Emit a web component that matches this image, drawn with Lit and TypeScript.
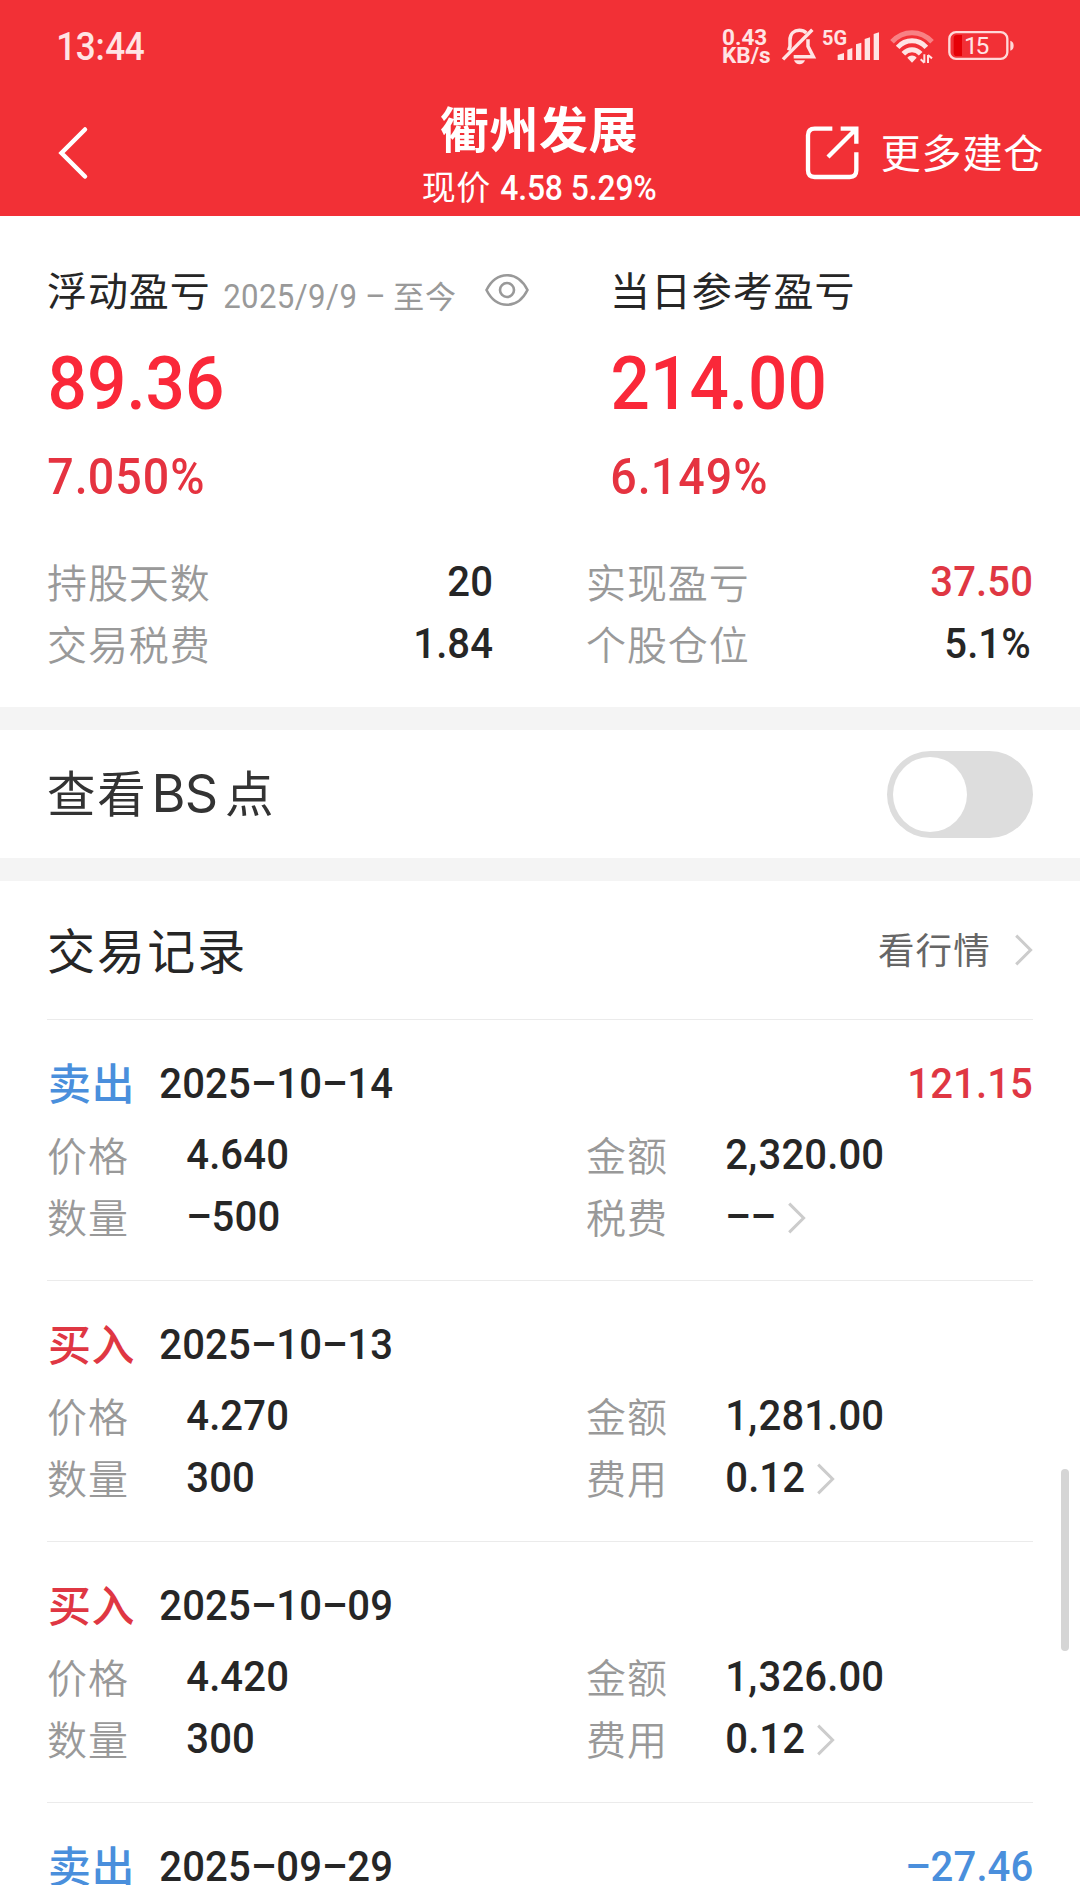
import { LitElement, html, css, svg, nothing } from "lit";
import { customElement, property } from "lit/decorators.js";

/** Advance widths in units of the cap height. */
const ADVANCE: Record<string, number> = {
  ".": 0.36, ",": 0.335, "–": 0.82, "/": 0.56, "%": 1.03, ":": 0.36, " ": 0.33,
};
const DIGIT = 0.744;
const CONDENSE = 0.925;
const CAP_RATIO = 0.711;

/** Condensed tabular figures; its box is exactly as high as the figures. */
@customElement("figure-text")
class FigureText extends LitElement {
  @property() text = "";
  @property({ type: Number }) cap = 30.8;
  @property({ type: Number }) pitch = DIGIT;

  static styles = css`
    :host { display: block; flex: none; }
    .box { display: block; overflow: visible; }
    .txt { font-family: Roboto, "Liberation Sans", sans-serif; fill: currentColor; }
  `;

  render() {
    const xs: string[] = [];
    let x = 0;
    for (const ch of this.text) {
      xs.push(((x + 0.01 * this.cap) / CONDENSE).toFixed(2));
      x += (ADVANCE[ch] ?? this.pitch) * this.cap;
    }
    return html`<svg class="box" width=${x.toFixed(2)} height=${this.cap}>
      ${svg`<text class="txt" x=${xs.join(" ")} y=${this.cap} font-size=${this.cap / CAP_RATIO}
        transform="scale(${CONDENSE} 1)">${this.text}</text>`}
    </svg>`;
  }
}

const chevron = html`<svg class="chevron" width="20" height="34" viewBox="0 0 20 34">
  <path d="M2.2 2.6 L16.6 17 L2.2 31.4" fill="none" stroke="#cccccc" stroke-width="3" />
</svg>`;

interface Trade {
  side: "买入" | "卖出";
  date: string;
  pnl?: string;
  loss?: boolean;
  price?: string;
  qty?: string;
  amount?: string;
  feeLabel?: string;
  fee?: string;
}

const TRADES: Trade[] = [
  { side: "卖出", date: "2025–10–14", pnl: "121.15", price: "4.640", qty: "–500", amount: "2,320.00", feeLabel: "税费", fee: "––" },
  { side: "买入", date: "2025–10–13", price: "4.270", qty: "300", amount: "1,281.00", feeLabel: "费用", fee: "0.12" },
  { side: "买入", date: "2025–10–09", price: "4.420", qty: "300", amount: "1,326.00", feeLabel: "费用", fee: "0.12" },
  { side: "卖出", date: "2025–09–29", pnl: "–27.46", loss: true },
];

@customElement("app-root")
class AppRoot extends LitElement {
  static styles = css`
    :host {
      display: block;
      position: relative;
      width: 1080px;
      height: 1885px;
      overflow: hidden;
      background: #fff;
      color: #262626;
      font-family: "Noto Sans CJK SC", sans-serif;
      line-height: 1;
    }
    svg { display: block; flex: none; }
    .header { height: 216px; background: #f23036; color: #fff; }
    .status {
      height: 92px;
      box-sizing: border-box;
      display: flex;
      align-items: flex-start;
      padding: 0 65px 0 56px;
      color: #ffe4e4;
    }
    .time { margin: 32.5px auto 0 0; font-weight: 500; }
    .speed {
      margin: 27.5px 0 0;
      width: 59px;
      font: 700 22.5px/18.8px Roboto, sans-serif;
    }
    .net { font: 700 20px/18px Roboto, sans-serif; margin: 29px 0 0 4px; width: 15px; }
    .icon { margin-top: 26.6px; }
    .wifi { margin-left: 10px; }
    .fiveg { white-space: nowrap; }
    .battery { margin: 31px 0 0 14px; }
    .batt-text { font-family: Roboto, sans-serif; font-size: 74px; fill: #ffe4e4; }

    .nav {
      height: 124px;
      display: grid;
      grid-template-columns: 1fr auto 1fr;
    }
    .back { margin: 33px 0 0 56px; }
    .heading { display: flex; flex-direction: column; align-items: center; }
    .title { font-size: 49px; font-weight: 700; letter-spacing: 0.6px; margin: 9.5px 2px 0 0; }
    .sub { display: flex; align-items: center; margin-top: 22px; font-weight: 500; }
    .sub-label { font-size: 34px; margin: -4px 9px 0 0; letter-spacing: 0.6px; font-weight: 400; }
    .more { display: flex; justify-content: flex-end; padding-right: 36px; }
    .share { margin-top: 33.3px; }
    .more-text { font-size: 40px; letter-spacing: 0.8px; margin: 39px 0 0 20px; }

    .summary { height: 491px; box-sizing: border-box; padding: 0 47px; }
    .pair { display: grid; grid-template-columns: 563px 1fr; }
    .caption { display: flex; height: 140px; }
    .caption-label { font-size: 40px; letter-spacing: 0.9px; margin-top: 53px; }
    .since { display: flex; color: #999; margin: 68px 0 0 12px; }
    .since-now { font-size: 31px; letter-spacing: 0.7px; margin: -5.5px 0 0 9px; }
    .eye { margin: 56px 0 0 27px; }
    .big { color: #fa2839; font-weight: 500; height: 102px; }
    .mid { color: #e53340; font-weight: 500; height: 92px; }
    .stats { display: grid; grid-template-columns: 446px 447px; column-gap: 93px; }
    .stat { height: 62px; display: flex; align-items: center; justify-content: space-between; }
    .label { font-size: 40px; letter-spacing: 0.9px; color: #999; font-weight: 350; }
    .value { font-weight: 500; margin-top: -2px; }
    .up { color: #df3743; }
    .down { color: #4a8fdc; }

    .gap { height: 23px; background: #f4f4f4; }
    .bs {
      height: 128px;
      box-sizing: border-box;
      padding: 0 47px;
      display: flex;
      justify-content: space-between;
      align-items: center;
      color: #333;
    }
    .bs-text { display: flex; align-items: baseline; font-size: 48.5px; letter-spacing: 1.8px; margin-top: -3px; }
    .latin { font: 400 52px/48px Inter, sans-serif; letter-spacing: -1px; margin: 0 8px 0 4px; }
    .toggle {
      width: 146px; height: 87px; box-sizing: border-box; padding: 6px;
      border-radius: 43.5px; background: #ddd; margin-top: 1px;
    }
    .knob { width: 74px; height: 75px; border-radius: 50%; background: #fff; }

    .records { padding: 0 47px; }
    .rec-head { height: 138px; display: flex; justify-content: space-between; border-bottom: 1px solid #ebebeb; }
    .rec-title { font-size: 48px; letter-spacing: 2.1px; margin-top: 42.5px; }
    .quote { display: flex; color: #666; }
    .quote-text { font-size: 36.5px; letter-spacing: 1.2px; margin: 50px 21px 0 0; }
    .quote .chevron { margin: 52px -1px 0 2px; }
    .trade { height: 261px; box-sizing: border-box; padding-top: 33px; border-bottom: 1px solid #ebebeb; }
    .trade-head { height: 60px; display: flex; align-items: center; margin-bottom: 10px; }
    .side { font-size: 43px; letter-spacing: 0.4px; margin: -2.5px 24px 0 1px; font-weight: 500; }
    .pnl { margin: -2px 0 0 auto; font-weight: 500; }
    .cells { display: grid; grid-template-columns: 539px 1fr; }
    .cell { height: 62px; display: flex; align-items: center; }
    .cell .label { width: 139px; flex: none; }
    .cell .chevron { margin: 3px 0 0 11px; }
    .thumb {
      position: absolute; left: 1061px; top: 1469px; width: 8px; height: 182px;
      border-radius: 4px; background: #d5d5d5;
    }
  `;

  private trade(t: Trade) {
    const sideClass = t.side === "买入" ? "up" : "down";
    return html`<div class="trade">
      <div class="trade-head">
        <span class="side ${sideClass}">${t.side}</span>
        <figure-text class="value" text=${t.date}></figure-text>
        ${t.pnl
          ? html`<figure-text class="pnl ${t.loss ? "down" : "up"}" text=${t.pnl}></figure-text>`
          : nothing}
      </div>
      ${t.price
        ? html`<div class="cells">
            ${this.cell("价格", t.price)} ${this.cell("金额", t.amount!)}
            ${this.cell("数量", t.qty!)} ${this.cell(t.feeLabel!, t.fee!, true)}
          </div>`
        : nothing}
    </div>`;
  }

  private cell(label: string, value: string, link = false) {
    return html`<div class="cell">
      <span class="label">${label}</span>
      <figure-text class="value" text=${value}></figure-text>
      ${link ? chevron : nothing}
    </div>`;
  }

  private stat(label: string, value: string, tone = "") {
    return html`<div class="stat">
      <span class="label">${label}</span>
      <figure-text class="value ${tone}" text=${value}></figure-text>
    </div>`;
  }

  private statusBar() {
    return html`<div class="status">
      <figure-text class="time" text="13:44" cap="27" pitch="0.725"></figure-text>
      <div class="speed">0.43<br />KB/s</div>
      <svg class="icon" width="37" height="38.4" viewBox="244 80 111 115" fill="none" stroke="#ffe4e4" stroke-width="10.500">
        <path d="M267 150 L271 138 V119 C271 99 284 90 299 90 C308 90 315 93 320 98" />
        <path d="M325 117 V138 L341 169 H282" />
        <path d="M338 88 L250 177" />
        <path d="M283 180 H316 C313 188 307 192 299.500 192 C292 192 286 188 283 180 Z" fill="#ffe4e4" stroke="none" />
      </svg>
      <div class="net"><span class="fiveg">5G</span></div>
      <svg class="icon" width="43" height="38.4" viewBox="415 80 129 115" fill="#ffe4e4">
        <path d="M417 164 L436 158 V179 H417 Z M446 148 L461 143 V179 H446 Z M472 132 L488 127 V179 H472 Z M498 116 L514 111 V179 H498 Z M525 101 L541 96 V179 H525 Z" />
      </svg>
      <svg class="icon wifi" width="44" height="38.4" viewBox="576 80 132 115" fill="none" stroke="#ffe4e4" stroke-width="15">
        <path d="M582 124 C616 88 668 88 702 124" stroke-opacity="0.450" />
        <path d="M599 141 C623 115 661 115 685 141" />
        <path d="M616 160 C631 144 653 144 668 160" />
        <path d="M628 172 C636 163 648 163 656 172 L642 187 Z" fill="#ffe4e4" stroke="none" />
        <path d="M679 162 V187 M668 177 L679 187 M690 188 V164 M690 164 L702 174" stroke-width="6" />
      </svg>
      <svg class="battery" width="67" height="30" viewBox="748 93 201 90">
        <rect x="752" y="96.500" width="174" height="80" rx="20" fill="none" stroke="#ffd8d8" stroke-width="7" />
        <path d="M774 105 H790 V168 H774 Q765 168 765 158 V115 Q765 105 774 105 Z" fill="#e60006" />
        <path d="M935 122 Q945 125 945 137 Q945 149 935 152 Z" fill="#ffd8d8" />
        <text class="batt-text" x="796" y="163" textLength="76">15</text>
      </svg>
    </div>`;
  }

  render() {
    return html`
      <div class="header">
        ${this.statusBar()}
        <div class="nav">
          <svg class="back" width="36" height="56" viewBox="56 125 36 56" fill="none" stroke="#fff" stroke-width="4.500" stroke-linecap="round">
            <path d="M85 129.500 L61.500 153 L85 176.500" />
          </svg>
          <div class="heading">
            <span class="title">衢州发展</span>
            <div class="sub">
              <span class="sub-label">现价</span>
              <figure-text text="4.58 5.29%" cap="24.5" pitch="0.73"></figure-text>
            </div>
          </div>
          <div class="more">
            <svg class="share" width="56" height="56" viewBox="321 376 168 168" fill="none" stroke="#fff" stroke-width="13">
              <path d="M403 387 H350 Q330 387 330 407 V512 Q330 532 350 532 H455 Q475 532 475 512 V458" />
              <path d="M390 472 L468 394 M428 387 H475 V432" />
              <path d="M452 387 H475 V410 Z" fill="#fff" stroke="none" />
            </svg>
            <span class="more-text">更多建仓</span>
          </div>
        </div>
      </div>

      <div class="summary">
        <div class="pair">
          <div class="caption">
            <span class="caption-label">浮动盈亏</span>
            <div class="since">
              <figure-text text="2025/9/9 –" cap="24"></figure-text>
              <span class="since-now">至今</span>
            </div>
            <svg class="eye" width="46" height="36" viewBox="484.500 272 46 36" fill="none" stroke="#999" stroke-width="2.600">
              <path d="M487 290 C492 280 499 275.200 507.500 275.200 S523 280 528 290 C523 300 516 304.800 507.500 304.800 S492 300 487 290 Z" />
              <circle cx="507.500" cy="290" r="7" />
            </svg>
          </div>
          <div class="caption"><span class="caption-label">当日参考盈亏</span></div>
          <figure-text class="big" text="89.36" cap="53.3" pitch="0.74"></figure-text>
          <figure-text class="big" text="214.00" cap="53.3" pitch="0.74"></figure-text>
          <figure-text class="mid" text="7.050%" cap="35.8" pitch="0.768"></figure-text>
          <figure-text class="mid" text="6.149%" cap="35.8" pitch="0.768"></figure-text>
        </div>
        <div class="stats">
          ${this.stat("持股天数", "20")} ${this.stat("实现盈亏", "37.50", "up")}
          ${this.stat("交易税费", "1.84")} ${this.stat("个股仓位", "5.1%")}
        </div>
      </div>

      <div class="gap"></div>
      <div class="bs">
        <div class="bs-text"><span>查看</span><span class="latin">BS</span><span>点</span></div>
        <div class="toggle"><div class="knob"></div></div>
      </div>
      <div class="gap"></div>

      <div class="records">
        <div class="rec-head">
          <span class="rec-title">交易记录</span>
          <div class="quote"><span class="quote-text">看行情</span>${chevron}</div>
        </div>
        ${TRADES.map((t) => this.trade(t))}
      </div>
      <div class="thumb"></div>
    `;
  }
}
